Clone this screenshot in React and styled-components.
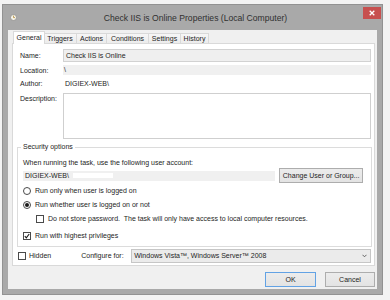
import React from "react"
import styled, { createGlobalStyle } from "styled-components"

const GlobalStyle = createGlobalStyle`
  html, body {
    margin: 0;
    background: #f3f3f3;
  }
  body {
    font-family: "Liberation Sans", Arial, sans-serif;
    font-size: 7px;
    line-height: 8px;
    color: #242424;
  }
`

const Desktop = styled.div`
  width: 390px;
  height: 300px;
  padding: 4px 0 0 2px;
  box-sizing: border-box;
  overflow: hidden;
`

const Window = styled.div`
  width: 381px;
  height: 291px;
  box-sizing: border-box;
  background: #a9a9a9;
  border: 1px solid #929292;
  display: flex;
  flex-direction: column;
  padding: 0 5px 5px 5px;
`

const TitleBar = styled.div`
  height: 25px;
  margin: 0 -5px;
  padding: 0 1px 0 7px;
  display: grid;
  grid-template-columns: 1fr auto 1fr;
  align-items: center;
`

const Title = styled.div`
  font-size: 8.6px;
  color: #303030;
  white-space: nowrap;
`

const CloseButton = styled.div`
  justify-self: end;
  align-self: start;
  margin-top: 2px;
  width: 18px;
  height: 12px;
  background: #c7504f;
  display: flex;
  align-items: center;
  justify-content: center;
`

const Client = styled.div`
  flex: 1;
  background: #f0f0f0;
  display: flex;
  flex-direction: column;
  padding: 1px 2px 0 4px;
`

const TabStrip = styled.div`
  height: 12px;
  display: flex;
  align-items: flex-end;
  padding-left: 2px;
`

const Tab = styled.div`
  width: ${p => p.$w}px;
  height: ${p => (p.$active ? 13 : 10)}px;
  margin: ${p => (p.$active ? "0 -1px -1px -1px" : "0")};
  box-sizing: border-box;
  border: 1px solid #d9d9d9;
  border-bottom: none;
  border-left: ${p => (p.$first || p.$active ? "1px solid #d9d9d9" : "none")};
  background: ${p => (p.$active ? "#fff" : "linear-gradient(#f6f6f6, #ececec)")};
  position: relative;
  z-index: ${p => (p.$active ? 1 : 0)};
  display: flex;
  justify-content: center;
  align-items: center;
  padding-top: ${p => (p.$active ? 0 : 1)}px;
  white-space: nowrap;
`

const Panel = styled.div`
  height: 223px;
  box-sizing: border-box;
  border: 1px solid #d9d9d9;
  background: #fff;
  padding: 5px 3px 0 7px;
  display: flex;
  flex-direction: column;
`

const FieldRow = styled.div`
  display: grid;
  grid-template-columns: 43px 1fr;
  align-items: ${p => (p.$top ? "start" : "center")};
  margin-top: ${p => p.$mt || 0}px;
  min-height: 10px;
`

const Label = styled.div`
  padding-top: ${p => p.$pt || 0}px;
  white-space: nowrap;
`

const TextBox = styled.div`
  height: ${p => p.$h}px;
  box-sizing: border-box;
  background: ${p => p.$bg || "#efefef"};
  border: ${p => (p.$border ? `1px solid ${p.$border}` : "none")};
  padding-left: ${p => p.$pl ?? 2}px;
  display: flex;
  align-items: center;
  white-space: nowrap;
  position: relative;
`

const GroupBox = styled.fieldset`
  margin: 4px -1px 0 -3px;
  padding: 8px 8px 5px 5px;
  border: 1px solid #dcdcdc;
  height: 104px;
  box-sizing: border-box;
  min-width: 0;
  display: flex;
  flex-direction: column;
`

const Legend = styled.legend`
  padding: 0 2px;
  margin-left: -2px;
  line-height: 8px;
`

const AccountRow = styled.div`
  display: flex;
  align-items: center;
  gap: 4px;
  height: 15px;
  margin-top: 1px;
`

const Redacted = styled.span`
  display: inline-block;
  width: 40px;
  height: 5px;
  background: #fff;
  margin-left: 4px;
`

const Button = styled.div`
  width: ${p => p.$w}px;
  height: 15px;
  box-sizing: border-box;
  background: linear-gradient(#ececec, #e3e3e3);
  border: 1px solid ${p => (p.$default ? "#62a2e4" : "#adadad")};
  display: flex;
  align-items: center;
  justify-content: center;
  white-space: nowrap;
`

const OptionRow = styled.div`
  display: flex;
  align-items: center;
  gap: ${p => p.$gap ?? 4}px;
  height: 10px;
  margin-top: ${p => p.$mt || 0}px;
  margin-left: ${p => p.$ml || 0}px;
  white-space: nowrap;
`

const Radio = styled.span`
  width: 8px;
  height: 8px;
  box-sizing: border-box;
  border-radius: 50%;
  border: 1px solid #4a4a4a;
  background: #fff;
  display: flex;
  align-items: center;
  justify-content: center;
  &::after {
    content: "";
    width: 4px;
    height: 4px;
    border-radius: 50%;
    background: ${p => (p.$checked ? "#1a1a1a" : "transparent")};
  }
`

const Check = styled.span`
  width: 8px;
  height: 8px;
  box-sizing: border-box;
  border: 1px solid #4a4a4a;
  background: #fff;
  display: flex;
  align-items: center;
  justify-content: center;
`

const BottomRow = styled.div`
  display: flex;
  align-items: center;
  height: 14px;
  margin: 2px 0 0 -2px;
`

const ConfigureLabel = styled.span`
  margin-left: 30px;
  width: 50px;
  white-space: nowrap;
`

const ComboBox = styled.div`
  flex: 1;
  height: 14px;
  box-sizing: border-box;
  background: #ebebeb;
  border: 1px solid #c6c6c6;
  display: flex;
  align-items: center;
  justify-content: space-between;
  padding: 0 3px 0 2px;
  white-space: nowrap;
`

const ButtonRow = styled.div`
  display: flex;
  justify-content: flex-end;
  gap: 9px;
  margin-top: 6px;
`

const tabs = [
  { name: "General", w: 32, active: true },
  { name: "Triggers", w: 33 },
  { name: "Actions", w: 30 },
  { name: "Conditions", w: 42 },
  { name: "Settings", w: 32 },
  { name: "History", w: 28 },
]

function ClockIcon() {
  return (
    <svg width="7" height="7" viewBox="0 0 7 7">
      <circle cx="3.5" cy="3.5" r="3" fill="#f7f4e8" stroke="#8d8d8d" strokeWidth="0.8" />
      <path d="M3.5 1.6V3.6H5" fill="none" stroke="#b08a3a" strokeWidth="0.8" />
    </svg>
  )
}

function CheckMark() {
  return (
    <svg width="6" height="6" viewBox="0 0 6 6">
      <path d="M0.8 3.2L2.3 4.8L5.2 1" fill="none" stroke="#1a1a1a" strokeWidth="1.1" />
    </svg>
  )
}

export default function App() {
  return (
    <Desktop>
      <GlobalStyle />
      <Window>
        <TitleBar>
          <ClockIcon />
          <Title>Check IIS is Online Properties (Local Computer)</Title>
          <CloseButton>
            <svg width="6" height="6" viewBox="0 0 6 6">
              <path d="M0.7 0.7L5.3 5.3M5.3 0.7L0.7 5.3" stroke="#fff" strokeWidth="1.3" />
            </svg>
          </CloseButton>
        </TitleBar>
        <Client>
          <TabStrip>
            {tabs.map((t, i) => (
              <Tab key={t.name} $w={t.w} $active={t.active} $first={i === 0}>
                {t.name}
              </Tab>
            ))}
          </TabStrip>
          <Panel>
            <FieldRow>
              <Label>Name:</Label>
              <TextBox $h={13} $border="#d2d2d2">Check IIS is Online</TextBox>
            </FieldRow>
            <FieldRow $mt={3}>
              <Label $pt={2}>Location:</Label>
              <TextBox $h={10} $bg="#f0f0f0" $pl={1}>\</TextBox>
            </FieldRow>
            <FieldRow $mt={4}>
              <Label>Author:</Label>
              <TextBox $h={10} $bg="transparent">DIGIEX-WEB\</TextBox>
            </FieldRow>
            <FieldRow $mt={4} $top>
              <Label $pt={2}>Description:</Label>
              <TextBox $h={46} $bg="#fff" $border="#cfcfcf" />
            </FieldRow>
            <GroupBox>
              <Legend>Security options</Legend>
              <div>When running the task, use the following user account:</div>
              <AccountRow>
                <TextBox $h={10} $bg="#f0f0f0" style={{ width: 253 }}>
                  DIGIEX-WEB\<Redacted />
                </TextBox>
                <Button $w={84}>Change User or Group...</Button>
              </AccountRow>
              <OptionRow $mt={3}>
                <Radio />
                Run only when user is logged on
              </OptionRow>
              <OptionRow $mt={4}>
                <Radio $checked />
                Run whether user is logged on or not
              </OptionRow>
              <OptionRow $mt={4} $ml={13}>
                <Check />
                Do not store password.&nbsp; The task will only have access to local computer resources.
              </OptionRow>
              <OptionRow $mt={7}>
                <Check>
                  <CheckMark />
                </Check>
                Run with highest privileges
              </OptionRow>
            </GroupBox>
            <BottomRow>
              <OptionRow $gap={3}>
                <Check />
                Hidden
              </OptionRow>
              <ConfigureLabel>Configure for:</ConfigureLabel>
              <ComboBox>
                Windows Vista™, Windows Server™ 2008
                <svg width="5" height="4" viewBox="0 0 5 4">
                  <path d="M0.5 0.8L2.5 2.8L4.5 0.8" fill="none" stroke="#555" strokeWidth="0.9" />
                </svg>
              </ComboBox>
            </BottomRow>
          </Panel>
          <ButtonRow>
            <Button $w={51} $default>OK</Button>
            <Button $w={50}>Cancel</Button>
          </ButtonRow>
        </Client>
      </Window>
    </Desktop>
  )
}
